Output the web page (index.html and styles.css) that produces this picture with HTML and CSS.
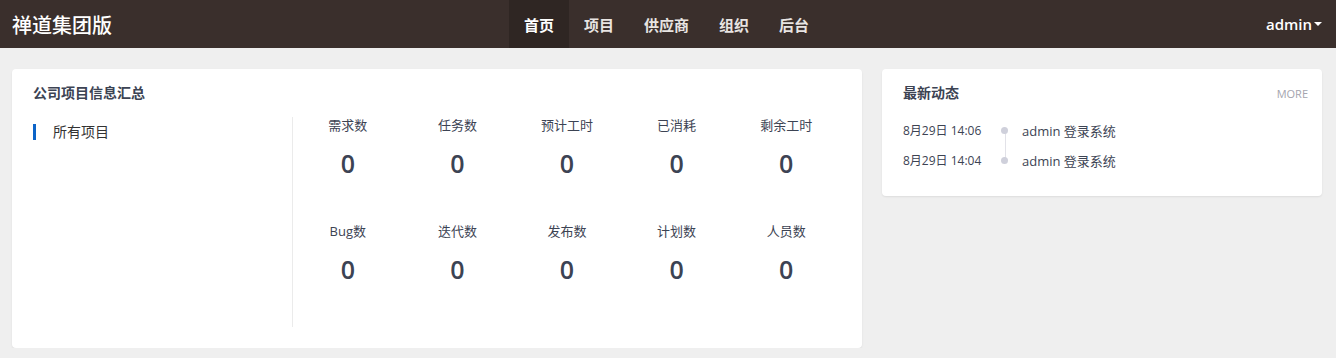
FILE: index.html
```html
<!DOCTYPE html>
<html lang="zh-CN">
<head>
    <meta charset="UTF-8">
    <meta name="viewport" content="width=device-width, initial-scale=1.0">
    <title>禅道集团版</title>
    <link rel="stylesheet" href="styles.css">
</head>
<body>

    <header class="topbar">
        <div class="brand">禅道集团版</div>
        <nav class="main-nav">
            <a class="nav-item active">首页</a>
            <a class="nav-item">项目</a>
            <a class="nav-item">供应商</a>
            <a class="nav-item">组织</a>
            <a class="nav-item">后台</a>
        </nav>
        <div class="user-menu">admin<span class="caret"></span></div>
    </header>

    <main class="dashboard">
        <section class="card summary">
            <h3 class="card-title">公司项目信息汇总</h3>
            <div class="summary-body">
                <ul class="project-list">
                    <li class="project-item active">所有项目</li>
                </ul>
                <div class="stats">
                    <div class="stat"><span class="stat-label">需求数</span><span class="stat-value">0</span></div>
                    <div class="stat"><span class="stat-label">任务数</span><span class="stat-value">0</span></div>
                    <div class="stat"><span class="stat-label">预计工时</span><span class="stat-value">0</span></div>
                    <div class="stat"><span class="stat-label">已消耗</span><span class="stat-value">0</span></div>
                    <div class="stat"><span class="stat-label">剩余工时</span><span class="stat-value">0</span></div>
                    <div class="stat"><span class="stat-label">Bug数</span><span class="stat-value">0</span></div>
                    <div class="stat"><span class="stat-label">迭代数</span><span class="stat-value">0</span></div>
                    <div class="stat"><span class="stat-label">发布数</span><span class="stat-value">0</span></div>
                    <div class="stat"><span class="stat-label">计划数</span><span class="stat-value">0</span></div>
                    <div class="stat"><span class="stat-label">人员数</span><span class="stat-value">0</span></div>
                </div>
            </div>
        </section>

        <section class="card dynamic">
            <div class="card-head">
                <h3 class="card-title">最新动态</h3>
                <a class="more">MORE</a>
            </div>
            <ul class="timeline">
                <li class="event">
                    <span class="event-time">8月29日 14:06</span>
                    <span class="event-dot"></span>
                    <span class="event-text">admin 登录系统</span>
                </li>
                <li class="event">
                    <span class="event-time">8月29日 14:04</span>
                    <span class="event-dot"></span>
                    <span class="event-text">admin 登录系统</span>
                </li>
            </ul>
        </section>
    </main>

</body>
</html>
```

FILE: styles.css
```css
body {
    margin: 0;
    padding: 0;
    background: #efefef;
    font-family: "Open Sans", "Noto Sans CJK SC", sans-serif;
    color: #3c4353;
}

/* top bar */
.topbar {
    height: 48px;
    background: #3a2f2c;
    display: flex;
    align-items: center;
    justify-content: space-between;
    padding: 0 14px 0 12px;
    position: relative;
}
.brand { color: #fff; font-size: 20px; font-weight: 500; }
.main-nav {
    position: absolute;
    left: 509px;
    top: 0;
    height: 48px;
    display: flex;
}
.nav-item {
    color: #e8e4e2;
    font-size: 15px;
    font-weight: bold;
    padding: 0 15px;
    display: flex;
    align-items: center;
    cursor: pointer;
}
.nav-item.active { background: #2f2623; color: #fff; }
.user-menu { color: #fff; font-size: 15px; font-weight: 600; display: flex; align-items: center; }
.caret {
    display: inline-block;
    margin-left: 2px;
    border-top: 4px solid #fff;
    border-left: 4px solid transparent;
    border-right: 4px solid transparent;
}

/* dashboard */
.dashboard {
    display: flex;
    align-items: flex-start;
    gap: 20px;
    padding: 21px 14px 0 12px;
}
.card {
    background: #fff;
    border-radius: 4px;
    box-shadow: 0 1px 2px rgba(0,0,0,0.08);
}
.card-title { margin: 0; font-size: 14px; font-weight: bold; color: #3c4353; line-height: 20px; }

.summary { flex: 1; height: 279px; padding: 14px 19px 0 21px; box-sizing: border-box; }
.summary-body { display: flex; margin-top: 14px; }
.project-list { list-style: none; margin: 0; padding: 0; width: 259px; border-right: 1px solid #ebebeb; height: 210px; }
.project-item { font-size: 14px; line-height: 16px; margin-top: 7px; padding-left: 17px; border-left: 3px solid #0c64c8; color: #333; }

.stats { display: grid; grid-template-columns: repeat(5, 109.6px); grid-auto-rows: 106px; }
.stat { display: flex; flex-direction: column; align-items: center; }
.stat-label { font-size: 13px; line-height: 20px; margin-top: -2px; color: #3c4353; }
.stat-value { font-size: 25px; font-weight: 600; line-height: 36px; margin-top: 10px; color: #3c4353; }

.dynamic { width: 440px; height: 127px; padding: 14px 14px 0 21px; box-sizing: border-box; }
.card-head { display: flex; justify-content: space-between; align-items: center; }
.more { font-size: 11px; color: #a4a4ae; }
.timeline { list-style: none; margin: 12px 0 0; padding: 0; position: relative; }
.timeline::before {
    content: "";
    position: absolute;
    left: 102px;
    top: 16px;
    height: 30px;
    border-left: 1px solid #e2e2e8;
}
.event { display: flex; align-items: center; height: 30px; }
.event-time { width: 98px; font-size: 12px; color: #3c4353; }
.event-dot { width: 7px; height: 7px; border-radius: 50%; background: #cfd0db; margin-right: 14px; position: relative; }
.event-text { font-size: 13px; color: #3c4353; }
```
